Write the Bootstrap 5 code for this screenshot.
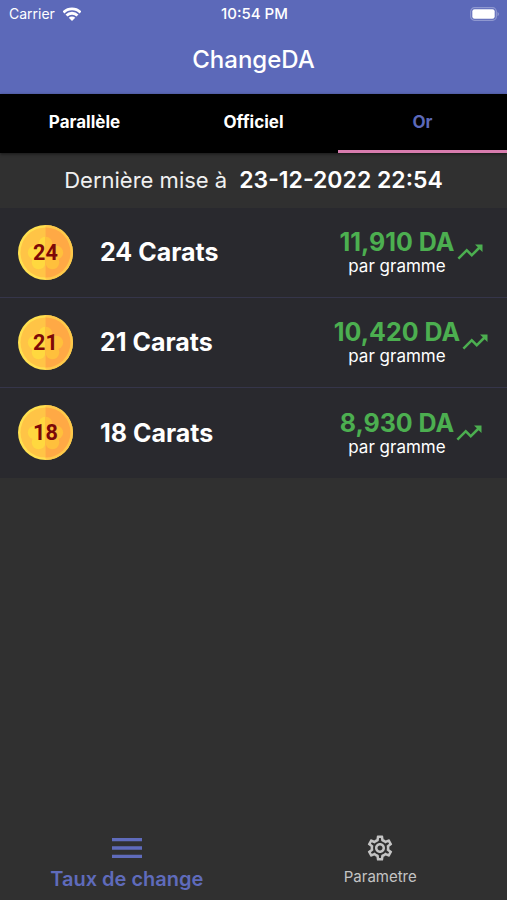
<!DOCTYPE html>
<html lang="fr" data-bs-theme="dark">
<head>
<meta charset="utf-8">
<meta name="viewport" content="width=device-width, initial-scale=1">
<title>ChangeDA</title>
<link href="https://cdn.jsdelivr.net/npm/bootstrap@5.3.0/dist/css/bootstrap.min.css" rel="stylesheet">
<style>
  body { font-family: Inter, "Liberation Sans", sans-serif; background: #303030; color: #fff; }
  .app-top { background: #5c69b9; }
  .status-bar { font-size: 14px; line-height: 28px; display: grid; grid-template-columns: 1fr auto 1fr; padding: 0 7px 0 9px; }
  .clock { font-size: 15px; font-weight: 500; }
  .app-title { font-size: 24px; line-height: 32px; padding: 16px 0 18px; font-weight: 500; }
  .rate-tabs { background: #000; box-shadow: 0 1px 3px #0008; }
  .rate-tabs .nav-link { color: #fff; font-size: 17px; line-height: 24px; font-weight: 700; border-radius: 0; padding: 16px 0; border-bottom: 3px solid transparent; }
  .rate-tabs .nav-link.active { color: #5c69b9; border-bottom-color: #d87cae; }
  .updated { font-size: 22px; line-height: 55px; color: #f0f0f0; gap: 12px; }
  .updated strong { font-size: 23px; font-weight: 600; color: #fff; }
  .rates .list-group-item { background: #29292e; color: #fff; height: 90px; border: 0; border-bottom: 1px solid #35354a; padding: 0 0 1px 18px; }
  .coin { width: 55px; height: 55px; flex: none; }
  .coin text { font: 700 22px Roboto, "Liberation Sans", sans-serif; fill: #7d0808; }
  .carats { font-size: 25px; line-height: 32px; font-weight: 700; margin-left: 27px; }
  .quote { display: grid; grid-template-columns: 1fr auto 1fr; width: 45%; }
  .amount { font-size: 25px; line-height: 28px; font-weight: 700; color: #4caf50; }
  .unit { font-size: 17px; line-height: 20px; }
  .tab-bar { height: 76px; }
  .tab-bar a { color: #c4c4c4; font-size: 15px; line-height: 18px; }
  .tab-bar a.current { color: #5f6bbb; font-size: 20px; font-weight: 600; line-height: 22px; }
  .glyph { height: 40px; }
</style>
<script src="https://cdn.jsdelivr.net/npm/bootstrap@5.3.0/dist/js/bootstrap.bundle.min.js"></script>
</head>
<body class="min-vh-100 d-flex flex-column">
<svg width="0" height="0" class="position-absolute" aria-hidden="true">
  <defs>
    <clipPath id="rightHalf"><rect x="28" y="0" width="28" height="56"/></clipPath>
    <g id="petals">
      <circle cx="28" cy="19" r="7"/><circle cx="39" cy="28" r="7"/><circle cx="35" cy="38" r="7"/><circle cx="21" cy="38" r="7"/><circle cx="17" cy="28" r="7"/><circle cx="28" cy="29" r="8"/>
    </g>
    <symbol id="coin" viewBox="0 0 56 56">
      <circle cx="28" cy="28" r="28" fill="#ffe04f"/>
      <circle cx="28" cy="28" r="25.500" fill="#ffc446"/>
      <use href="#petals" fill="#ffd83f"/>
      <g clip-path="url(#rightHalf)">
        <circle cx="28" cy="28" r="28" fill="#ffc84a"/>
        <circle cx="28" cy="28" r="25.500" fill="#ffa945"/>
        <use href="#petals" fill="#ffc03c"/>
      </g>
    </symbol>
    <symbol id="trend" viewBox="0 0 24 24"><path fill="#4caf50" d="M16 6l2.290 2.290-4.880 4.880-4-4L2 16.590 3.410 18l6-6 4 4 6.300-6.290L22 12V6z"/></symbol>
  </defs>
</svg>

<header class="app-top">
  <div class="status-bar">
    <div class="d-flex align-items-center gap-2"><span>Carrier</span>
      <svg width="18" height="15" viewBox="1 1 18 15" aria-label="Wi-Fi"><g fill="none" stroke="#fff" stroke-width="2.800"><path d="M1.500 6.500a12 12 0 0 1 17 0"/><path d="M4.500 9.500a7.800 7.800 0 0 1 11 0"/></g><path d="M10 15L6.750 11.750a4.600 4.600 0 0 1 6.500 0z" fill="#fff"/></svg>
    </div>
    <div class="clock">10:54 PM</div>
    <div class="d-flex align-items-center justify-content-end">
      <svg width="30" height="14" viewBox="0 0 30 14" aria-label="Batterie"><rect x=".7" y=".7" width="25.600" height="12.600" rx="3.800" fill="none" stroke="#8f98d0" stroke-width="1.200"/><rect x="2.300" y="2.300" width="22.400" height="9.400" rx="2.200" fill="#fff"/><path d="M27.500 4.700q3 2.300 0 4.600z" fill="#8f98d0"/></svg>
    </div>
  </div>
  <h1 class="app-title text-center mb-0">ChangeDA</h1>
</header>

<nav class="rate-tabs nav nav-justified" aria-label="Marché">
  <a class="nav-link" href="#parallele">Parallèle</a>
  <a class="nav-link" href="#officiel">Officiel</a>
  <a class="nav-link active" href="#or" aria-current="page">Or</a>
</nav>

<main class="flex-grow-1">
  <p class="updated d-flex justify-content-center mb-0"><span>Dernière mise à</span> <strong>23-12-2022 22:54</strong></p>
  <ul class="rates list-group list-group-flush">
    <li class="list-group-item d-flex align-items-center">
      <svg class="coin" viewBox="0 0 56 56"><use href="#coin"/><text x="28" y="36" text-anchor="middle">24</text></svg>
      <span class="carats">24 Carats</span>
      <div class="quote ms-auto align-items-center"><span></span><div class="text-center"><div class="amount">11,910 DA</div><div class="unit">par gramme</div></div><svg width="30" height="30" aria-label="En hausse"><use href="#trend"/></svg></div>
    </li>
    <li class="list-group-item d-flex align-items-center">
      <svg class="coin" viewBox="0 0 56 56"><use href="#coin"/><text x="28" y="36" text-anchor="middle">21</text></svg>
      <span class="carats">21 Carats</span>
      <div class="quote ms-auto align-items-center"><span></span><div class="text-center"><div class="amount">10,420 DA</div><div class="unit">par gramme</div></div><svg width="30" height="30" aria-label="En hausse"><use href="#trend"/></svg></div>
    </li>
    <li class="list-group-item d-flex align-items-center">
      <svg class="coin" viewBox="0 0 56 56"><use href="#coin"/><text x="28" y="36" text-anchor="middle">18</text></svg>
      <span class="carats">18 Carats</span>
      <div class="quote ms-auto align-items-center"><span></span><div class="text-center"><div class="amount">8,930 DA</div><div class="unit">par gramme</div></div><svg width="30" height="30" aria-label="En hausse"><use href="#trend"/></svg></div>
    </li>
  </ul>
</main>

<nav class="tab-bar row g-0 text-center" aria-label="Navigation principale">
  <a class="col current text-decoration-none" href="#taux" aria-current="page">
    <div class="glyph d-flex justify-content-center align-items-center mt-1"><svg width="40" height="40" viewBox="0 0 24 24" fill="currentColor"><path d="M3 18h18v-2H3v2zm0-5h18v-2H3v2zm0-7v2h18V6H3z"/></svg></div>
    Taux de change
  </a>
  <a class="col text-decoration-none" href="#parametre">
    <div class="glyph d-flex justify-content-center align-items-center mt-1"><svg width="30" height="30" viewBox="0 0 24 24" fill="currentColor"><path d="M19.43 12.98c.04-.32.07-.64.07-.98 0-.34-.03-.66-.07-.98l2.11-1.65c.19-.15.24-.42.12-.64l-2-3.460c-.09-.16-.26-.25-.44-.25-.06 0-.12.01-.17.03l-2.490 1c-.52-.4-1.080-.73-1.690-.98l-.38-2.650C14.460 2.180 14.250 2 14 2h-4c-.25 0-.46.18-.49.42l-.38 2.650c-.61.25-1.170.59-1.690.98l-2.490-1c-.06-.02-.12-.03-.18-.03-.17 0-.34.09-.43.25l-2 3.460c-.13.22-.07.49.12.64l2.110 1.650c-.04.32-.07.65-.07.98 0 .33.03.66.07.98l-2.110 1.650c-.19.15-.24.42-.12.64l2 3.460c.09.16.26.25.44.25.06 0 .12-.01.17-.03l2.490-1c.52.4 1.080.73 1.690.98l.38 2.650c.03.24.24.42.49.42h4c.25 0 .46-.18.49-.42l.38-2.650c.61-.25 1.170-.59 1.690-.98l2.490 1c.06.02.12.03.18.03.17 0 .34-.09.43-.25l2-3.460c.12-.22.07-.49-.12-.64l-2.110-1.650zm-1.980-1.710c.04.31.05.52.05.73 0 .21-.02.43-.05.73l-.14 1.130.89.7 1.080.84-.7 1.210-1.270-.51-1.040-.42-.9.68c-.43.32-.84.56-1.250.73l-1.060.43-.16 1.130-.2 1.350h-1.400l-.19-1.350-.16-1.130-1.060-.43c-.43-.18-.83-.41-1.230-.71l-.91-.7-1.060.43-1.270.51-.7-1.210 1.080-.84.89-.7-.14-1.130c-.03-.31-.05-.54-.05-.74s.02-.43.05-.73l.14-1.130-.89-.7-1.080-.84.7-1.210 1.270.51 1.040.42.9-.68c.43-.32.84-.56 1.250-.73l1.060-.43.16-1.130.2-1.350h1.390l.19 1.350.16 1.130 1.060.43c.43.18.83.41 1.230.71l.91.7 1.060-.43 1.270-.51.7 1.210-1.070.85-.89.7.14 1.130zM12 8c-2.210 0-4 1.790-4 4s1.790 4 4 4 4-1.790 4-4-1.790-4-4-4zm0 6c-1.100 0-2-.9-2-2s.9-2 2-2 2 .9 2 2-.9 2-2 2z"/></svg></div>
    Parametre
  </a>
</nav>
</body>
</html>
